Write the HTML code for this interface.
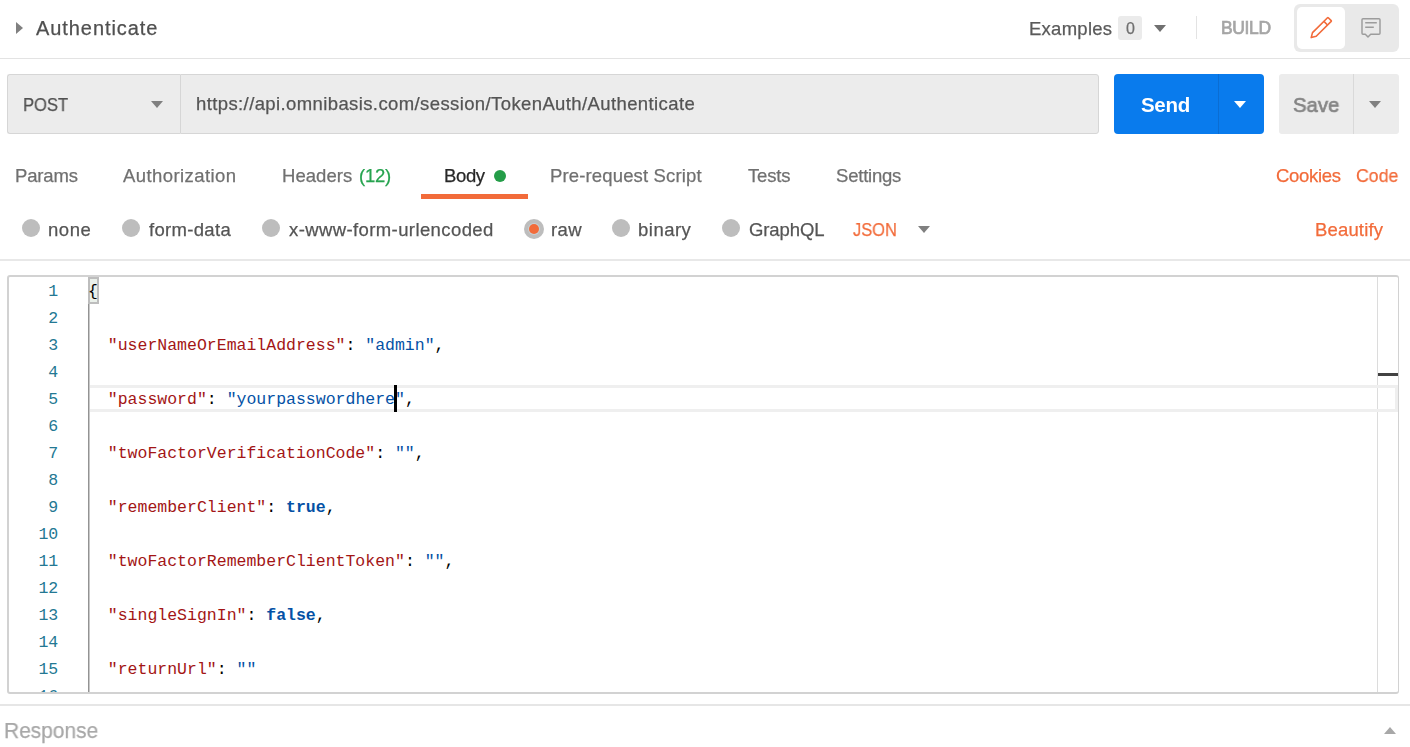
<!DOCTYPE html>
<html><head><meta charset="utf-8">
<style>
html,body{margin:0;padding:0;width:1410px;height:747px;overflow:hidden;background:#fff;position:relative;font-family:"Liberation Sans",sans-serif}
.a{position:absolute}
.t{position:absolute;white-space:nowrap;line-height:normal;font-family:"Liberation Sans",sans-serif;will-change:transform;-webkit-text-stroke:0.25px currentColor}
.tri-r{position:absolute;width:0;height:0;border-top:6px solid transparent;border-bottom:6px solid transparent;border-left:7px solid #808080}
.tri-d{position:absolute;width:0;height:0;border-left:6px solid transparent;border-right:6px solid transparent;border-top:7px solid #808080}
.tri-u{position:absolute;width:0;height:0;border-left:6px solid transparent;border-right:6px solid transparent;border-bottom:7px solid #a8a8a8}
.radio{position:absolute;top:219px;width:18px;height:18px;border-radius:50%;background:#bdbdbd}
#ed{position:absolute;left:0;top:277px;width:1377px;height:415px;overflow:hidden}
.cl{position:absolute;left:88px;white-space:pre;font-family:"Liberation Mono",monospace;font-size:16.5px;line-height:normal;color:#000}
.ln{position:absolute;left:0;width:58.2px;text-align:right;font-family:"Liberation Mono",monospace;font-size:16.5px;line-height:normal;color:#237893}
.k{color:#a31515}.s{color:#0451a5}.b{color:#0451a5;font-weight:bold}
</style></head><body>
<!-- header -->
<div class="tri-r" style="left:16px;top:22px"></div>
<div class="a" style="left:0;top:58px;width:1410px;height:1px;background:#e3e3e3"></div>
<div class="a" style="left:1118px;top:16px;width:24px;height:24px;border-radius:3px;background:#ebebeb"></div>
<div class="tri-d" style="left:1154px;top:25px;border-top-color:#707070"></div>
<div class="a" style="left:1196px;top:16px;width:1px;height:23px;background:#e3e3e3"></div>
<div class="a" style="left:1294px;top:4px;width:105px;height:48px;border-radius:6px;background:#e9e9e9"></div>
<div class="a" style="left:1297px;top:7px;width:48px;height:42px;border-radius:5px;background:#ffffff"></div>
<svg class="a" style="left:1290px;top:0" width="120" height="60" viewBox="0 0 120 60">
  <g fill="none" stroke="#f26b3a" stroke-width="1.6" stroke-linejoin="round">
    <path d="M21.2 37.6 L22.5 32.6 L37.5 17.7 Q37.9 17.3 38.3 17.7 L41.2 20.6 Q41.6 21 41.2 21.4 L26.2 36.3 Z"/>
    <path d="M33.9 21.4 L37.5 25"/>
  </g>
  <g fill="none" stroke="#9c9c9c" stroke-width="1.45" stroke-linejoin="round">
    <path d="M73 18.8 H89 Q90 18.8 90 19.8 V33.3 Q90 34.3 89 34.3 H80.7 L78 37.1 L75.3 34.3 H73 Q72 34.3 72 33.3 V19.8 Q72 18.8 73 18.8 Z"/>
    <path d="M75.2 22.7 H86.8 M75.2 27.2 H83.8"/>
  </g>
</svg>
<!-- url row -->
<div class="a" style="left:7px;top:74px;width:172px;height:58px;background:#ececec;border:1px solid #d6d6d6;border-right:none;border-radius:3px 0 0 3px"></div>
<div class="a" style="left:180px;top:74px;width:917px;height:58px;background:#ececec;border:1px solid #d6d6d6;border-radius:0 3px 3px 0"></div>
<div class="tri-d" style="left:151px;top:101px"></div>
<div class="a" style="left:1114px;top:74px;width:150px;height:60px;border-radius:4px;background:#097bed"></div>
<div class="a" style="left:1218px;top:74px;width:1px;height:60px;background:#0a6dd3"></div>
<div class="tri-d" style="left:1234px;top:101px;border-top-color:#fff"></div>
<div class="a" style="left:1279px;top:74px;width:120px;height:60px;border-radius:3px;background:#ececec"></div>
<div class="a" style="left:1353px;top:74px;width:1px;height:60px;background:#d9d9d9"></div>
<div class="tri-d" style="left:1369px;top:101px"></div>
<!-- tabs -->
<div class="a" style="left:494px;top:170px;width:12px;height:12px;border-radius:50%;background:#249d48"></div>
<div class="a" style="left:421px;top:194px;width:107px;height:5px;background:#f26b3a"></div>
<!-- radios -->
<div class="radio" style="left:22px"></div>
<div class="radio" style="left:122px"></div>
<div class="radio" style="left:262px"></div>
<div class="radio" style="left:524px;width:20px;height:20px"></div>
<div class="a" style="left:529px;top:224px;width:10px;height:10px;border-radius:50%;background:#f26b3a;box-shadow:0 0 0 1px #c9d0d3"></div>
<div class="radio" style="left:612px"></div>
<div class="radio" style="left:722px"></div>
<div class="tri-d" style="left:918px;top:226px"></div>
<div class="a" style="left:0;top:259px;width:1410px;height:2px;background:#e8e8e8"></div>
<!-- editor -->
<div class="a" style="left:7px;top:275px;width:1389px;height:415px;border:2px solid #d2d2d2;border-right-width:1px;border-radius:3px"></div>
<div class="a" style="left:1377px;top:277px;width:1px;height:415px;background:#dcdcdc"></div>
<div class="a" style="left:1378px;top:373px;width:20px;height:3px;background:#424242"></div>
<div class="a" style="left:90px;top:385px;width:1305px;height:21px;border:3px solid #efefef;border-left:none"></div>
<div id="ed">
<div class="a" style="left:88px;top:27px;width:1px;height:400px;background:#939393"></div>
<div class="a" style="left:89px;top:27px;width:1px;height:400px;background:#c8c8c8"></div>
<div class="a" style="left:88px;top:0px;width:7px;height:23px;border:2px solid #bdbdbd;background:#eaf0ea"></div>
<div class="ln" style="top:5px">1</div>
<div class="cl" style="top:5px"><span>{</span></div>
<div class="ln" style="top:32px">2</div>
<div class="ln" style="top:59px">3</div>
<div class="cl" style="top:59px">  <span class="k">"userNameOrEmailAddress"</span>: <span class="s">"admin"</span>,</div>
<div class="ln" style="top:86px">4</div>
<div class="ln" style="top:113px">5</div>
<div class="cl" style="top:113px">  <span class="k">"password"</span>: <span class="s">"yourpasswordhere"</span>,</div>
<div class="ln" style="top:140px">6</div>
<div class="ln" style="top:167px">7</div>
<div class="cl" style="top:167px">  <span class="k">"twoFactorVerificationCode"</span>: <span class="s">""</span>,</div>
<div class="ln" style="top:194px">8</div>
<div class="ln" style="top:221px">9</div>
<div class="cl" style="top:221px">  <span class="k">"rememberClient"</span>: <span class="b">true</span>,</div>
<div class="ln" style="top:248px">10</div>
<div class="ln" style="top:275px">11</div>
<div class="cl" style="top:275px">  <span class="k">"twoFactorRememberClientToken"</span>: <span class="s">""</span>,</div>
<div class="ln" style="top:302px">12</div>
<div class="ln" style="top:329px">13</div>
<div class="cl" style="top:329px">  <span class="k">"singleSignIn"</span>: <span class="b">false</span>,</div>
<div class="ln" style="top:356px">14</div>
<div class="ln" style="top:383px">15</div>
<div class="cl" style="top:383px">  <span class="k">"returnUrl"</span>: <span class="s">""</span></div>
<div class="ln" style="top:410px">16</div>
</div>
<div class="a" style="left:394px;top:385px;width:3px;height:27px;background:#000"></div>
<!-- response -->
<div class="a" style="left:0;top:704px;width:1410px;height:2px;background:#e6e6e6"></div>
<div class="tri-u" style="left:1384px;top:727px"></div>
<span class="t" style="left:35.70px;top:17.00px;font-size:20px;font-weight:400;color:#505050;letter-spacing:0.930px">Authenticate</span>
<span class="t" style="left:1028.50px;top:18.00px;font-size:18.5px;font-weight:400;color:#5a5a5a;letter-spacing:0.260px">Examples</span>
<span class="t" style="left:1126.00px;top:20.00px;font-size:16px;font-weight:400;color:#707070;letter-spacing:0.000px">0</span>
<span class="t" style="left:1220.50px;top:18.00px;font-size:17.5px;font-weight:600;color:#a6a6a6;letter-spacing:-0.351px;font-weight:400;-webkit-text-stroke:0.7px currentColor">BUILD</span>
<span class="t" style="left:23.10px;top:94.00px;font-size:18.5px;font-weight:400;color:#505050;letter-spacing:0.000px;transform:scaleX(0.8967);transform-origin:0 0">POST</span>
<span class="t" style="left:195.60px;top:93.00px;font-size:18.5px;font-weight:400;color:#555555;letter-spacing:0.392px">https://api.omnibasis.com/session/TokenAuth/Authenticate</span>
<span class="t" style="left:1141.30px;top:93.00px;font-size:20.5px;font-weight:700;color:#ffffff;letter-spacing:-0.299px;-webkit-text-stroke:0">Send</span>
<span class="t" style="left:1293.00px;top:93.00px;font-size:21px;font-weight:600;color:#858585;letter-spacing:0.000px;transform:scaleX(0.9664);transform-origin:0 0;font-weight:400;-webkit-text-stroke:0.7px currentColor">Save</span>
<span class="t" style="left:14.70px;top:165.00px;font-size:18.5px;font-weight:400;color:#707070;letter-spacing:-0.158px">Params</span>
<span class="t" style="left:123.20px;top:165.00px;font-size:18.5px;font-weight:400;color:#707070;letter-spacing:0.425px">Authorization</span>
<span class="t" style="left:282.00px;top:165.00px;font-size:18.5px;font-weight:400;color:#707070;letter-spacing:0.054px">Headers</span>
<span class="t" style="left:359.00px;top:165.00px;font-size:18.5px;font-weight:400;color:#26a34f;letter-spacing:-0.246px">(12)</span>
<span class="t" style="left:443.70px;top:165.00px;font-size:18.5px;font-weight:400;color:#282828;letter-spacing:-0.372px">Body</span>
<span class="t" style="left:550.30px;top:165.00px;font-size:18.5px;font-weight:400;color:#707070;letter-spacing:0.144px">Pre-request Script</span>
<span class="t" style="left:747.50px;top:165.00px;font-size:18.5px;font-weight:400;color:#707070;letter-spacing:-0.157px">Tests</span>
<span class="t" style="left:835.90px;top:165.00px;font-size:18.5px;font-weight:400;color:#707070;letter-spacing:-0.214px">Settings</span>
<span class="t" style="left:1275.50px;top:165.00px;font-size:18.5px;font-weight:400;color:#f26b3a;letter-spacing:-0.314px">Cookies</span>
<span class="t" style="left:1356.40px;top:165.00px;font-size:18.5px;font-weight:400;color:#f26b3a;letter-spacing:0.000px;transform:scaleX(0.9559);transform-origin:0 0">Code</span>
<span class="t" style="left:48.40px;top:219.00px;font-size:18.5px;font-weight:400;color:#555555;letter-spacing:0.578px">none</span>
<span class="t" style="left:149.20px;top:219.00px;font-size:18.5px;font-weight:400;color:#555555;letter-spacing:0.315px">form-data</span>
<span class="t" style="left:289.20px;top:219.00px;font-size:18.5px;font-weight:400;color:#555555;letter-spacing:0.397px">x-www-form-urlencoded</span>
<span class="t" style="left:550.60px;top:219.00px;font-size:18.5px;font-weight:400;color:#555555;letter-spacing:0.375px">raw</span>
<span class="t" style="left:638.20px;top:219.00px;font-size:18.5px;font-weight:400;color:#555555;letter-spacing:0.493px">binary</span>
<span class="t" style="left:748.90px;top:219.00px;font-size:18.5px;font-weight:400;color:#555555;letter-spacing:-0.101px">GraphQL</span>
<span class="t" style="left:853.20px;top:219.00px;font-size:18.5px;font-weight:400;color:#f26b3a;letter-spacing:0.000px;transform:scaleX(0.8900);transform-origin:0 0">JSON</span>
<span class="t" style="left:1315.00px;top:219.00px;font-size:18.5px;font-weight:400;color:#f26b3a;letter-spacing:0.158px">Beautify</span>
<span class="t" style="left:4.25px;top:718.00px;font-size:22px;font-weight:400;color:#a8a8a8;letter-spacing:0.000px;transform:scaleX(0.9517);transform-origin:0 0">Response</span>
</body></html>
